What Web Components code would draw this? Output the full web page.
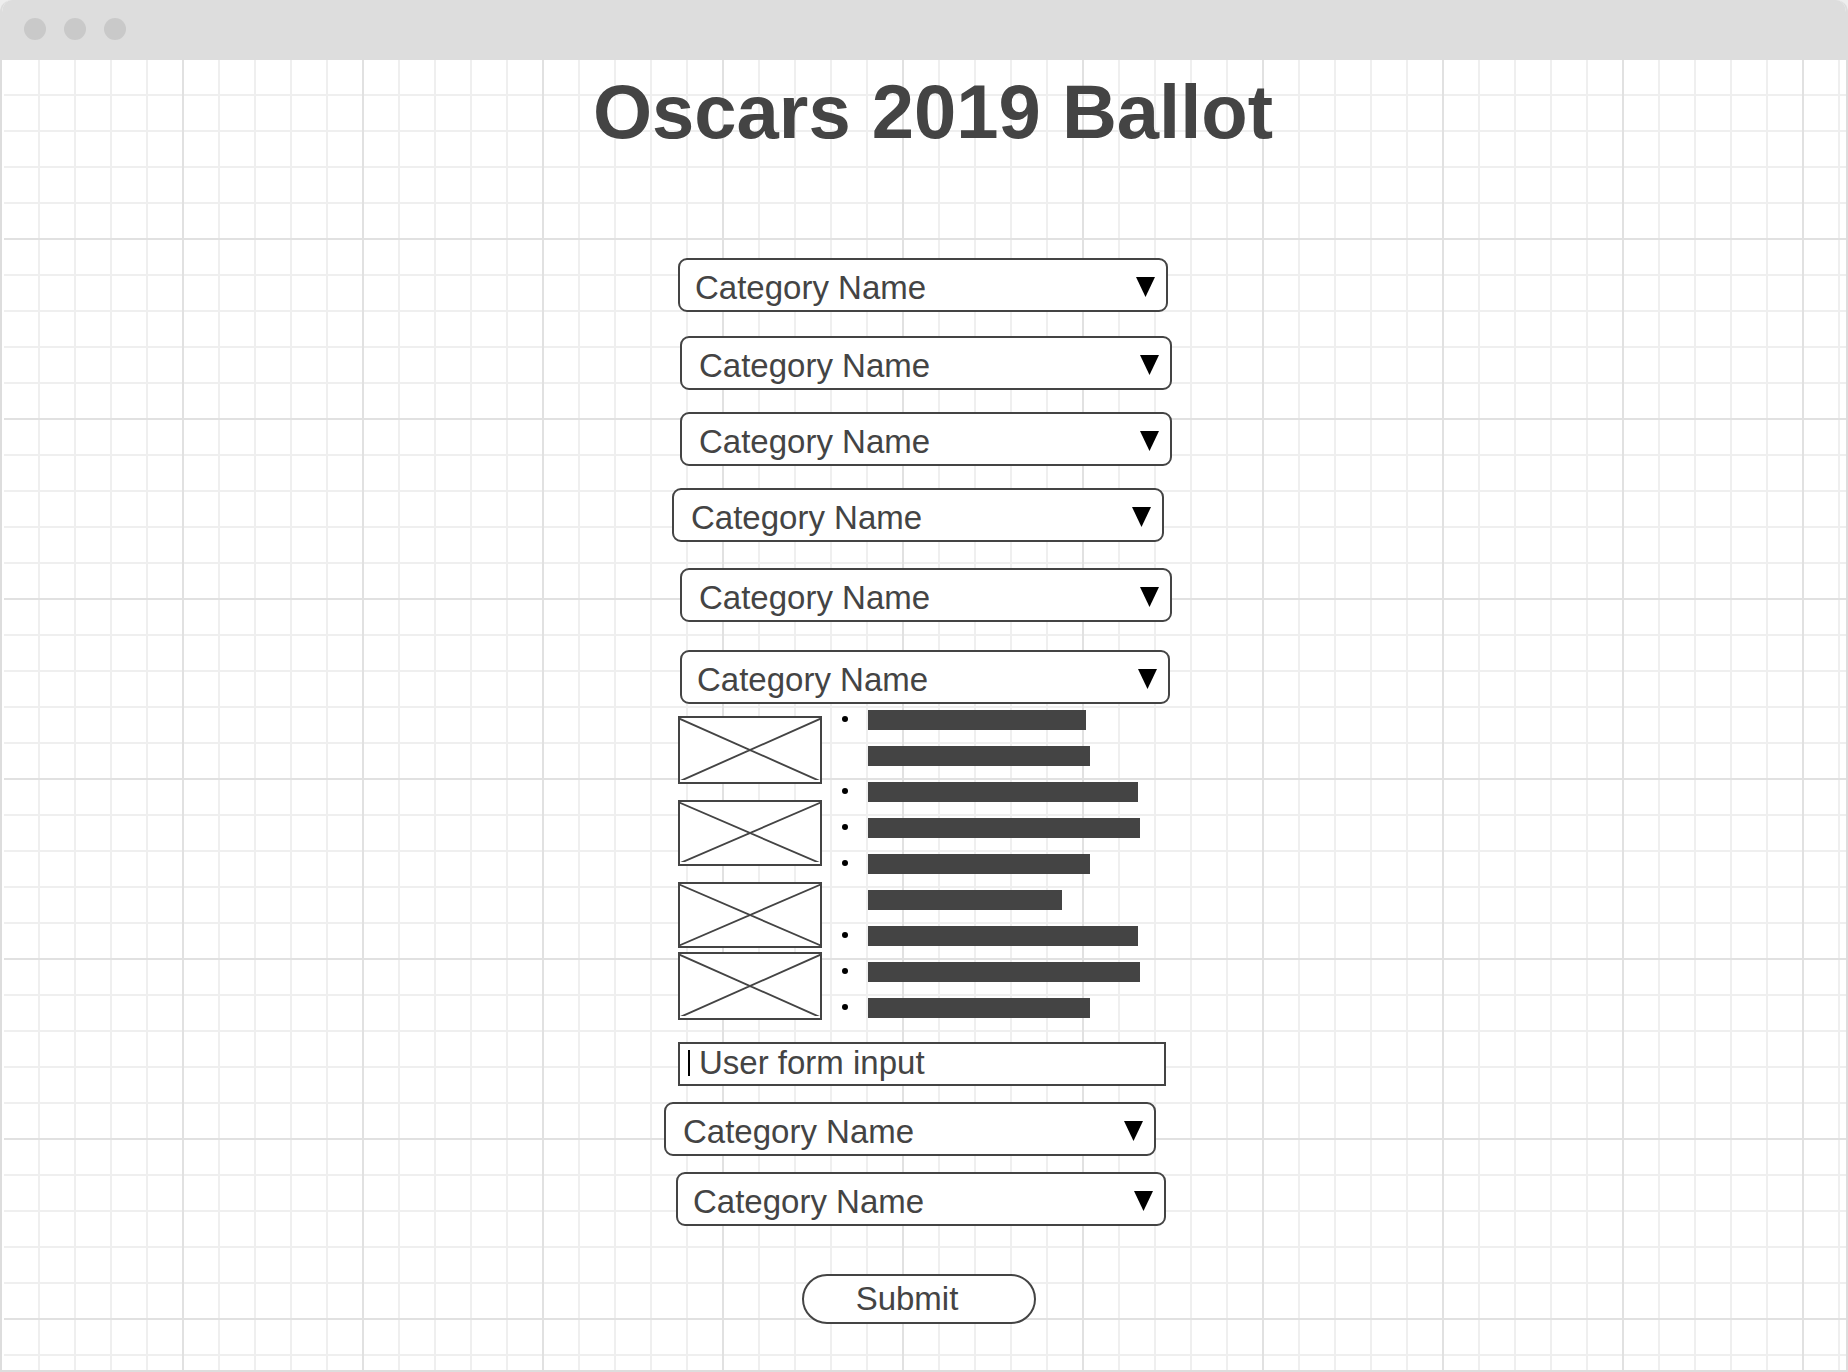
<!DOCTYPE html>
<html lang="en">
<head>
<meta charset="utf-8">
<title>Oscars 2019 Ballot</title>
<style>
  html { background: #eee; }
  body { margin: 0; font-family: "Liberation Sans", Arial, sans-serif; color: #444; }
</style>
</head>
<body>
<browser-frame>
  <ballot-title>Oscars 2019 Ballot</ballot-title>
  <ballot-form></ballot-form>
</browser-frame>

<script>
const define = (name, html, setup) => {
  const template = document.createElement('template');
  template.innerHTML = html;
  customElements.define(name, class extends HTMLElement {
    constructor() {
      super();
      this.attachShadow({ mode: 'open' }).append(template.content.cloneNode(true));
    }
    connectedCallback() { if (setup) setup(this, this.shadowRoot); }
  });
};

// Window chrome with a ruled canvas below the bar
define('browser-frame', `
  <style>
    :host { display: flex; flex-direction: column; box-sizing: border-box; min-height: 100vh;
      border: 2px solid #ddd; border-top: 0; border-radius: 12px 12px 0 0; overflow: hidden; background: #fff; }
    header { display: flex; align-items: center; gap: 18px; height: 60px; margin: 0 -2px;
      padding: 0 24px 2px; box-sizing: border-box; background: #ddd; }
    header i { width: 22px; height: 22px; border-radius: 50%; background: #c9c9c9; }
    main { flex: 1; border-left: 2px solid #fff; padding: 10px 2px 46px 0;
      --minor: #efefef; --major: #e1e1e1;
      background-image:
        linear-gradient(90deg, var(--major) 2px, transparent 2px),
        linear-gradient(var(--major) 2px, transparent 2px),
        linear-gradient(90deg, var(--minor) 2px, transparent 2px),
        linear-gradient(var(--minor) 2px, transparent 2px);
      background-size: 180px 180px, 180px 180px, 36px 36px, 36px 36px;
      background-position: -2px -2px; background-clip: padding-box; }
  </style>
  <header><i></i><i></i><i></i></header>
  <main><slot></slot></main>`);

define('ballot-title', `
  <style>
    :host { display: block; padding-left: 18px; text-align: center; }
    h1 { margin: 0; font-size: 76px; line-height: 84px; font-weight: 700; }
  </style>
  <h1><slot></slot></h1>`);

define('category-select', `
  <style>
    :host { display: grid; width: 490px; height: 54px; align-items: center; }
    :host([wide]) { width: 492px; }
    select, svg { grid-area: 1 / 1; }
    select { appearance: none; box-sizing: border-box; width: 100%; height: 100%; margin: 0;
      padding: 4px 40px 0 15px; border: 2px solid #444; border-radius: 9px; background: #fff;
      color: inherit; font: inherit; font-size: 33px; }
    :host([wide]) select { padding-left: 17px; }
    svg { justify-self: end; margin: 3px 13px 0 0; pointer-events: none; }
  </style>
  <select aria-label="Category"><option>Category Name</option></select>
  <svg width="19" height="20" viewBox="0 0 19 20"><path d="M0 0H19L9.5 20Z"/></svg>`);

define('image-frame', `
  <style>
    :host { display: block; box-sizing: border-box; width: 144px; height: 66px;
      border: 2px solid #444; background: #fff; }
    :host([tall]) { height: 68px; }
    svg { display: block; width: 100%; height: 100%; clip-path: inset(0 0 2px 0); }
    :host([flush]) svg { clip-path: none; }
  </style>
  <svg viewBox="2 0 140 64" preserveAspectRatio="none" fill="none" stroke="#444" stroke-width="1.9">
    <path d="M0 0L144 64M144 0L0 64"/>
  </svg>`);

// Greyed-out nominee text; a bar without a bullet continues the one above
define('nominee-lines', `
  <style>
    :host { display: block; }
    ul { list-style: none; margin: 0; padding: 0; display: grid; gap: 16px; }
    li { display: flex; gap: 20px; height: 20px; }
    li::before { content: ""; width: 6px; height: 6px; margin-top: 6px; border-radius: 50%; background: #000; }
    li.more::before { background: none; }
    span { height: 20px; background: #444; }
  </style>
  <ul></ul>`, (host, root) => {
  const lines = [218, -222, 270, 272, 222, -194, 270, 272, 222];
  root.querySelector('ul').innerHTML = lines.map(w =>
    `<li class="${w < 0 ? 'more' : ''}"><span style="width:${Math.abs(w)}px"></span></li>`).join('');
});

define('text-field', `
  <style>
    :host { display: flex; box-sizing: border-box; width: 488px; height: 44px; align-items: center; gap: 9px;
      padding: 0 8px 2px; border: 2px solid #444; background: #fff; }
    i { width: 2px; height: 26px; background: #000; }
    input { flex: 1; min-width: 0; margin: 0; padding: 0; border: 0; outline: 0; background: none;
      color: inherit; font: inherit; font-size: 33px; }
  </style>
  <i></i><input type="text" aria-label="User form input" value="User form input">`);

define('submit-button', `
  <style>
    :host { display: block; }
    button { box-sizing: border-box; width: 234px; height: 50px; padding: 0 24px 0 0;
      border: 2px solid #444; border-radius: 25px; background: #fff; color: inherit;
      font: inherit; font-size: 33px; display: block; }
  </style>
  <button type="submit"><slot></slot></button>`);

define('ballot-form', `
  <style>
    :host { display: block; margin-top: 104px; }
    form { width: 492px; margin: 0 auto; display: flex; flex-direction: column; }
    section { display: flex; flex-direction: column; }
    .upper { gap: 22px; margin: 24px 0 0 2px; }
    .lower { gap: 28px; margin: 26px 0 0 2px; }
    .out { margin-left: -8px; }
    .detail { display: flex; gap: 20px; margin-top: 6px; }
    .thumbs { display: grid; gap: 16px; padding-top: 6px; align-content: start; }
    .pair { display: grid; gap: 4px; }
    .write-in { gap: 16px; margin: 22px 4px 0 0; align-items: flex-end; }
    .write-in .far { margin-right: 10px; }
    submit-button { margin: 48px 0 0 124px; }
  </style>
  <form>
    <category-select></category-select>
    <section class="upper">
      <category-select wide></category-select>
      <category-select wide></category-select>
      <category-select wide class="out"></category-select>
    </section>
    <section class="lower">
      <category-select wide></category-select>
      <category-select></category-select>
    </section>
    <div class="detail">
      <div class="thumbs">
        <image-frame tall></image-frame>
        <image-frame></image-frame>
        <div class="pair"><image-frame flush></image-frame><image-frame tall></image-frame></div>
      </div>
      <nominee-lines></nominee-lines>
    </div>
    <section class="write-in">
      <text-field></text-field>
      <category-select wide class="far"></category-select>
      <category-select></category-select>
    </section>
    <submit-button>Submit</submit-button>
  </form>`);
</script>
</body>
</html>
